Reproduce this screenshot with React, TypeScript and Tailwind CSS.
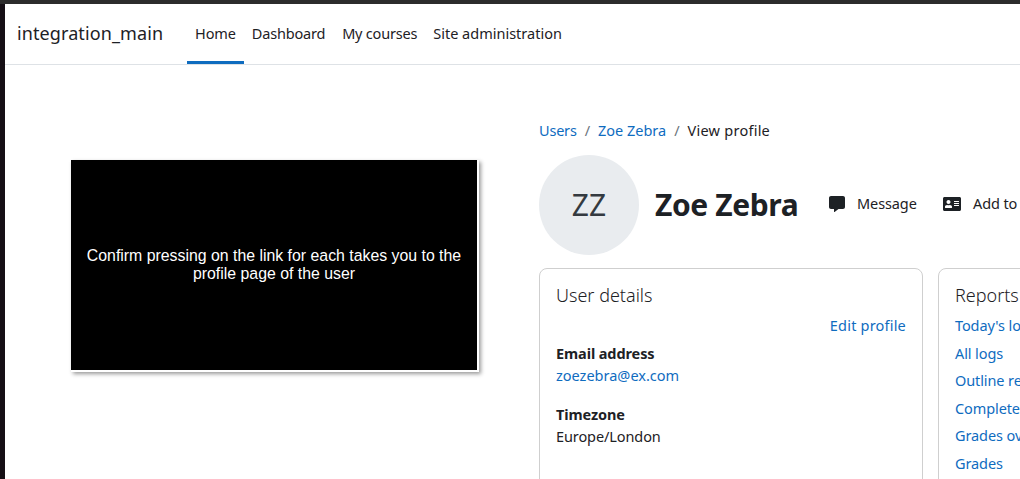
import { FaAddressCard, FaCommentAlt } from 'react-icons/fa';

const navItems = [
  { label: 'Home', cls: 'tracking-[-0.1px]' },
  { label: 'Dashboard', cls: 'tracking-[-0.2px]' },
  { label: 'My courses', cls: 'tracking-[-0.2px] ml-px' },
  { label: 'Site administration', cls: 'tracking-[0px]' },
];
const reports = ["Today's logs", 'All logs', 'Outline report', 'Complete report', 'Grades overview', 'Grades'];

export default function App() {
  return (
    <div className="h-[479px] w-[1020px] overflow-hidden bg-white text-[15px] text-[#1d2125] flex flex-col" style={{ fontFamily: "'Noto Sans', sans-serif" }}>
      <div className="h-1 shrink-0 bg-[#2c2c2c]" />
      <div className="flex flex-1 min-h-0">
        <div className="w-[5px] shrink-0 bg-[#150f15]" />
        <div className="flex-1 min-w-0 flex flex-col">
          {/* Navbar */}
          <nav className="h-[61px] shrink-0 border-b border-[#dee2e6] flex items-stretch pl-3">
            <div className="flex items-center text-[18px] w-[170px] pb-[2px] tracking-[0.1px]">integration_main</div>
            <div className="flex">
              {navItems.map((item, i) => (
                <a key={item.label} className={`flex items-center px-2 h-[60px] text-[14.5px] ${item.cls} ${i === 0 ? 'border-b-[3px] border-[#0f6cbf] pt-[3px]' : ''}`}>
                  {item.label}
                </a>
              ))}
            </div>
          </nav>

          <div className="flex flex-1 min-h-0">
            {/* Black video panel */}
            <div className="w-[534px] shrink-0 pl-[66px] pt-[95px]">
              <div className="w-[408px] h-[212px] bg-black border-r-2 border-b-2 border-white shadow-[2px_2px_4px_rgba(0,0,0,0.4)] flex items-center justify-center text-center text-white text-[15.85px] leading-[18px] px-3" style={{ fontFamily: "'Liberation Sans', sans-serif" }}>
                <p>Confirm pressing on the link for each takes you to the profile page of the user</p>
              </div>
            </div>

            {/* Profile */}
            <div className="w-[600px] shrink-0 pt-[55px]">
              <div className="flex items-center gap-[8px] text-[14.5px] leading-5 tracking-[-0.1px]">
                <a className="text-[#0f6cbf] tracking-[-0.2px]">Users</a>
                <span className="text-[#6a737b]">/</span>
                <a className="text-[#0f6cbf] tracking-[0px]">Zoe Zebra</a>
                <span className="text-[#6a737b]">/</span>
                <span className="tracking-[0.25px]">View profile</span>
              </div>

              <div className="flex items-center mt-[15px]">
                <div className="w-[100px] h-[100px] rounded-full bg-[#e9ecef] flex items-center justify-center pb-[2px] text-[30px] text-[#343a40]">ZZ</div>
                <h1 className="ml-4 w-[174px] text-[30px] pb-[2px] font-bold tracking-[-0.4px]">Zoe Zebra</h1>
                <div className="flex items-center pb-[2px] text-[14.5px] tracking-[-0.1px]">
                  <FaCommentAlt className="w-4 h-4 mr-3" />
                  <span className="w-[86px]">Message</span>
                  <FaAddressCard className="w-[18px] h-[18px] mr-3" />
                  <span className="whitespace-nowrap">Add to contacts</span>
                </div>
              </div>

              <div className="flex gap-4 mt-[13px]">
                <section className="w-[384px] h-[240px] shrink-0 border border-[#cfcfcf] rounded-lg pl-4 pr-4 pt-[14px]">
                  <h3 className="text-[18px] leading-[24px] font-light text-[#1d2125]">User details</h3>
                  <div className="text-right text-[#0f6cbf] text-[14.5px] leading-5 mt-[8px] tracking-[0.2px]">Edit profile</div>
                  <dl className="mt-[7px] text-[14.5px] leading-[22px] tracking-[-0.1px]">
                    <dt className="font-bold">Email address</dt>
                    <dd className="text-[#0f6cbf] tracking-[0px]">zoezebra@ex.com</dd>
                    <dt className="font-bold mt-[17px]">Timezone</dt>
                    <dd>Europe/London</dd>
                  </dl>
                </section>
                <section className="w-[300px] h-[240px] shrink-0 -ml-px border border-[#cfcfcf] rounded-lg px-4 pt-[14px]">
                  <h3 className="text-[18px] leading-[24px] font-light">Reports</h3>
                  <ul className="mt-[8px] text-[#0f6cbf] text-[14.5px] leading-[20px] space-y-[7.6px] tracking-[-0.1px]">
                    {reports.map((r) => (
                      <li key={r}>{r}</li>
                    ))}
                  </ul>
                </section>
              </div>
            </div>
          </div>
        </div>
      </div>
    </div>
  );
}
